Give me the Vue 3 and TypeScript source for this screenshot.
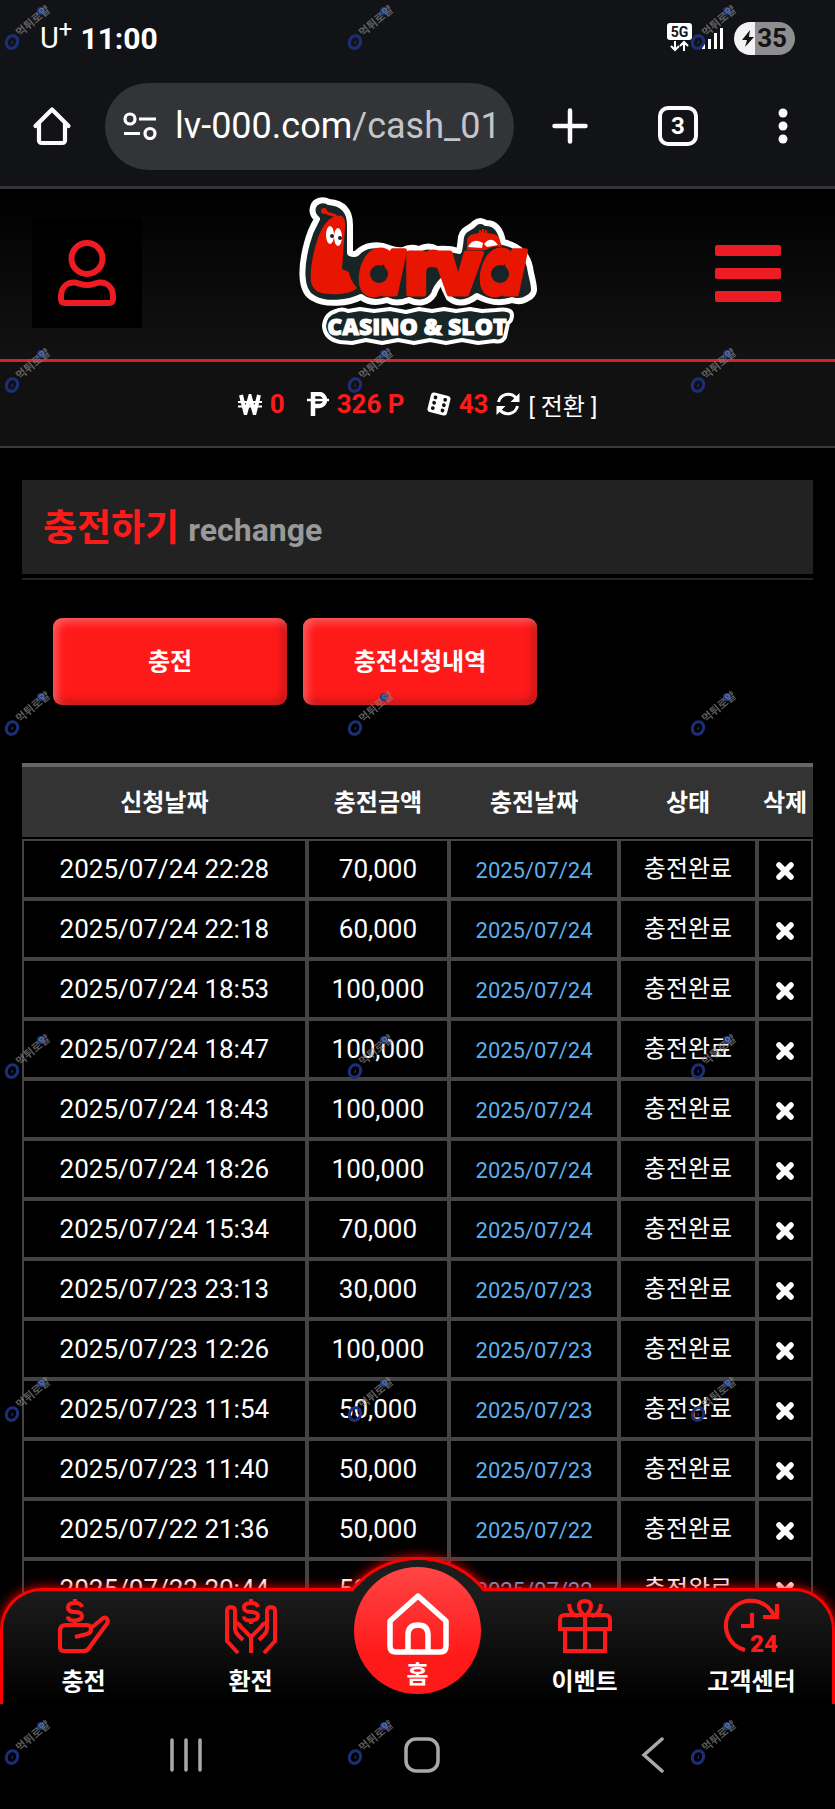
<script setup lang="ts">
interface Row {
  requested: string
  amount: string
  charged: string
}

const rows: Row[] = [
  ['2025/07/24 22:28', '70,000'],
  ['2025/07/24 22:18', '60,000'],
  ['2025/07/24 18:53', '100,000'],
  ['2025/07/24 18:47', '100,000'],
  ['2025/07/24 18:43', '100,000'],
  ['2025/07/24 18:26', '100,000'],
  ['2025/07/24 15:34', '70,000'],
  ['2025/07/23 23:13', '30,000'],
  ['2025/07/23 12:26', '100,000'],
  ['2025/07/23 11:54', '50,000'],
  ['2025/07/23 11:40', '50,000'],
  ['2025/07/22 21:36', '50,000'],
  ['2025/07/22 20:44', '50,000'],
].map(([requested, amount]) => ({ requested, amount, charged: requested.slice(0, 10) }))

const headings = ['신청날짜', '충전금액', '충전날짜', '상태', '삭제']
</script>

<template>
  <div class="phone">
    <div class="status">
      <span class="carrier">U<sup>+</sup></span>
      <span class="clock">11:00</span>
      <span class="status-icons">
        <svg width="56" height="30" viewBox="0 0 56 30" aria-label="5G">
          <rect x="0" y="0" width="25" height="17" rx="3" fill="#fff" />
          <text x="12.5" y="14" text-anchor="middle" class="five-g">5G</text>
          <path d="M8 18v9M4 23l4 4 4-4M17 28v-9M13 23l4-4 4 4" fill="none" stroke="#fff" stroke-width="2" />
          <path d="M36.500 21v5M42.500 16v10M48.500 10v16M54.500 5v21" stroke="#fff" stroke-width="3" />
        </svg>
        <span class="battery">
          <svg width="12" height="17" viewBox="0 0 12 17"><path d="M8 0 0 10h5L3 17 12 7H7Z" fill="#121317" /></svg>
          <b>35</b>
        </span>
      </span>
    </div>

    <div class="browser">
      <button class="plain" aria-label="홈페이지">
        <svg width="40" height="40" viewBox="0 0 40 40">
          <path d="M3.500 20 20 3.500 36.500 20M7 17v17.500a2.500 2.500 0 0 0 2.500 2.500h21a2.500 2.500 0 0 0 2.500-2.500V17" fill="none" stroke="#fdfafd" stroke-width="4.200" stroke-linejoin="round" stroke-linecap="round" />
        </svg>
      </button>
      <div class="address">
        <svg width="34" height="28" viewBox="0 0 34 28" fill="none" stroke="#fff" stroke-width="3.200">
          <circle cx="7" cy="7" r="5" /><path d="M16 7h17M1 21.500h16" /><circle cx="27" cy="21.500" r="5" />
        </svg>
        <span class="url">lv-000.com<i>/cash_01</i></span>
      </div>
      <button class="plain new-tab" aria-label="새 탭">
        <svg width="36" height="36" viewBox="0 0 36 36"><path d="M18 2.500v31M2.500 18h31" stroke="#fdfafd" stroke-width="4.500" stroke-linecap="round" /></svg>
      </button>
      <button class="tabs">3</button>
      <button class="plain more" aria-label="메뉴">
        <svg width="10" height="36" viewBox="0 0 10 36" fill="#fdfafd"><circle cx="5" cy="5" r="4.500" /><circle cx="5" cy="18" r="4.500" /><circle cx="5" cy="31" r="4.500" /></svg>
      </button>
    </div>

    <header class="site-header">
      <button class="account" aria-label="내 정보">
        <svg width="58" height="66" viewBox="0 0 58 66" fill="none" stroke="#ed1c24" stroke-width="6">
          <circle cx="29" cy="18.500" r="15.500" />
          <path d="M3 59V57C3 47 9 42.500 16 42.500c4 0 7 2.500 13 2.500s9-2.500 13-2.500c7 0 13 4.500 13 14.500v2q0 4-4 4H7q-4 0-4-4Z" />
        </svg>
      </button>

      <a href="#" class="logo">
        <svg width="240" height="152" viewBox="0 0 240 152" role="img" aria-label="Larva Casino &amp; Slot">
          <path
            d="M15 10C17 3 25 2 31 5C43 6 52 12 52 28V56Q56 58 59 56C66 48 80 46 91 51Q99 54 105 53Q112 49 121 52Q131 47 139 52Q151 51 161 54Q162 50 163 40C165 31 172 32 177 26Q182 22 188 26C198 26 203 33 205 45C222 49 231 58 233 76C237 92 238 97 230 101Q223 106 214 103Q197 109 179 99Q163 111 151 101Q146 92 144 84Q138 90 136 97C130 107 119 107 111 103Q98 108 89 103Q74 108 63 100C51 106 28 109 15 101C1 94 3 68 9 46C12 34 15 29 19 22Q13 17 15 10Z"
            fill="#182526" stroke="#fff" stroke-width="6" stroke-linejoin="round" />
          <g fill="#e81500">
            <path d="M38 19C27 22 21 35 17 51C13 66 12 78 13 85C15 94 22 97 32 97C43 98 54 96 59 91Q52 83 51 75L44 72L47 31C48 20 44 17 38 19Z" />
            <path d="M39 21C36 15 32 20 27 14" fill="none" stroke="#e81500" stroke-width="3" /><circle cx="26" cy="14" r="3" />
            <path d="M169 53V43Q170 38 176 37L184 35L195 37Q201 38 202 44L204 50Q195 48 188 53Z" />
            <path d="M182 38v-5M185 38v-6M188 38v-5" stroke="#e81500" stroke-width="2" />
          </g>
          <ellipse cx="32" cy="38" rx="4" ry="9" fill="#fff" /><ellipse cx="40" cy="40" rx="4" ry="9" fill="#fff" />
          <circle cx="34" cy="39" r="2" fill="#182526" /><circle cx="42" cy="41" r="2" fill="#182526" />
          <path d="M170 50Q175 40 185 46L184 51ZM186 47Q193 38 200 48L189 50Z" fill="#fff" />
          <g class="letters">
            <text class="round" x="60" y="97">a</text>
            <text x="107" y="97">r</text>
            <text x="136" y="97">v</text>
            <text class="round" x="181" y="97">a</text>
          </g>
          <circle cx="81" cy="77" r="9" fill="#182526" /><circle cx="202" cy="77" r="9" fill="#182526" />
          <path
            d="M38 114Q44 111 50 114L62 112L76 114L92 112L108 115L121 112L134 114L146 112L158 114L172 112L184 114L198 113Q214 111 214 118Q214 124 210 126L207 140Q204 146 196 144L180 146L164 143L148 146L132 143L116 146L100 143L84 146L68 143L54 146L42 145Q27 142 26 129Q27 117 38 114Z"
            fill="#182526" stroke="#fff" stroke-width="4" stroke-linejoin="round" />
          <text class="tag" x="119" y="138">CASINO &amp; SLOT</text>
        </svg>
      </a>

      <button class="burger" aria-label="전체 메뉴"><span></span><span></span><span></span></button>
    </header>

    <div class="balance">
      <svg width="24" height="21" viewBox="0 0 24 21" fill="none" stroke="#fff"><path d="M3 1 7.500 19 12 3l4.500 16L21 1" stroke-width="4" /><path d="M0 8h24M0 12.500h24" stroke-width="2" /></svg>
      <b>0</b>
      <svg class="after" width="22" height="24" viewBox="0 0 22 24" fill="none" stroke="#fff"><path d="M6 24V2h6a5.500 5.500 0 0 1 0 12H6" stroke-width="4.500" /><path d="M0 8h22" stroke-width="2.500" /></svg>
      <b>326 P</b>
      <svg class="after" width="24" height="24" viewBox="0 0 24 24">
        <g transform="rotate(14 12 12)"><rect x="2" y="2" width="20" height="20" rx="3" fill="#fff" />
          <g fill="#111"><circle cx="7" cy="6.500" r="1.900" /><circle cx="7" cy="12" r="1.900" /><circle cx="7" cy="17.500" r="1.900" /><circle cx="17" cy="6.500" r="1.900" /><circle cx="17" cy="12" r="1.900" /><circle cx="17" cy="17.500" r="1.900" /></g>
        </g>
      </svg>
      <b>43</b>
      <button class="convert">
        <svg width="24" height="24" viewBox="0 0 24 24"><path d="M2.500 10A10 10 0 0 1 20 6M21.500 14A10 10 0 0 1 4 18" fill="none" stroke="#fff" stroke-width="3" /><path d="M23.500 1v9h-9ZM.5 23v-9h9Z" fill="#fff" /></svg>
        <span>[ 전환 ]</span>
      </button>
    </div>

    <main>
      <h1>충전하기 <small>rechange</small></h1>
      <div class="actions">
        <button>충전</button>
        <button>충전신청내역</button>
      </div>
      <table>
        <colgroup><col class="c1" /><col class="c2" /><col class="c3" /><col class="c4" /><col class="c5" /></colgroup>
        <thead>
          <tr><th v-for="h in headings" :key="h" scope="col">{{ h }}</th></tr>
        </thead>
        <tbody>
          <tr v-for="r in rows" :key="r.requested">
            <td>{{ r.requested }}</td>
            <td>{{ r.amount }}</td>
            <td class="charged">{{ r.charged }}</td>
            <td class="state">충전완료</td>
            <td>
              <button class="remove" aria-label="삭제">
                <svg width="18" height="18" viewBox="0 0 18 18"><path d="m3 3 12 12M15 3 3 15" stroke="#fff" stroke-width="5.500" stroke-linecap="round" /></svg>
              </button>
            </td>
          </tr>
        </tbody>
      </table>
    </main>

    <footer class="dock">
      <nav>
        <div class="plate"></div>
        <div class="hump"></div>
        <div class="cover"></div>
        <a href="#">
          <svg width="54" height="54" viewBox="0 0 54 54" fill="none" stroke="#ff1a1a" stroke-width="4.200" stroke-linejoin="round">
            <path d="M3 48V32q0-6 6-6h21q4 0 4 4t-4 5l-12 3M33 30 45 20q3-3 5 0t-1 6L32 49q-2 3-5 3H7q-4 0-4-4" />
            <path d="M25 8q-1-4-7-4-7 0-7 4.500t7 4.500 7 4-7 4.500-7-4M18 0v4M18 21v4" />
          </svg>
          충전
        </a>
        <a href="#">
          <svg width="54" height="54" viewBox="0 0 54 54" fill="none" stroke="#ff1a1a" stroke-width="4">
            <path d="M14 54 3 42V12q0-4 4-4t4 4v18M40 54l11-12V12q0-4-4-4t-4 4v18M11 24q4 0 6 4l10 10v16M43 24q-4 0-6 4L27 38M11 30q0 3 3 6l5 5M43 30q0 3-3 6l-5 5" />
            <path d="M34 8q-1-4-7-4-7 0-7 4.500t7 4.500 7 4-7 4.500-7-4M27 0v4M27 21v4" />
          </svg>
          환전
        </a>
        <a href="#" class="home">
          <svg width="62" height="62" viewBox="0 0 62 62" fill="none" stroke="#fff" stroke-width="5.500" stroke-linejoin="round">
            <path d="M31 3 3 28v25q0 6 6 6h44q6 0 6-6V28ZM21 59V42q0-10 10-10t10 10v17" />
          </svg>
          홈
        </a>
        <a href="#">
          <svg width="54" height="54" viewBox="0 0 54 54" fill="none" stroke="#ff1a1a" stroke-width="4">
            <path d="M7 30v22h40V30M27 17v35M2 28v-7q0-5 5-5h40q5 0 5 5v9H2ZM27 17q-6-5-6-10t6-5 6 5-6 10M20 17q-8-1-9-12M34 17q8-1 9-12" />
          </svg>
          이벤트
        </a>
        <a href="#">
          <svg width="54" height="54" viewBox="0 0 54 54" fill="none" stroke="#ff1a1a" stroke-width="4.200">
            <path d="M20 51A25 25 0 1 1 49 17M52 5v13H38M27 14v13H16" />
            <text x="39" y="53" text-anchor="middle" class="n24">24</text>
          </svg>
          고객센터
        </a>
      </nav>
      <div class="system">
        <button class="plain" aria-label="최근 앱"><svg width="32" height="34" viewBox="0 0 32 34"><path d="M2 2v30M16 2v30M30 2v30" stroke="#a9a9a9" stroke-width="3.500" stroke-linecap="round" /></svg></button>
        <button class="plain" aria-label="홈 화면"><svg width="36" height="36" viewBox="0 0 36 36"><rect x="2" y="2" width="32" height="32" rx="10" fill="none" stroke="#a9a9a9" stroke-width="3.500" /></svg></button>
        <button class="plain" aria-label="뒤로"><svg width="24" height="36" viewBox="0 0 24 36"><path d="M21 2 3 18l18 16" fill="none" stroke="#a9a9a9" stroke-width="3.500" stroke-linecap="round" /></svg></button>
      </div>
    </footer>

    <svg class="watermark" aria-hidden="true">
      <defs>
        <pattern id="mark" width="343" height="343" patternUnits="userSpaceOnUse">
          <ellipse cx="12" cy="42" rx="5.500" ry="6.500" fill="none" stroke="#1c2e78" stroke-width="3" transform="rotate(25 12 42)" />
          <path d="m11 43 2-3v4Z" fill="#1c2e78" />
          <circle cx="41" cy="11" r="4" fill="#1c3a86" />
          <text class="mark-text" transform="translate(20 37) rotate(-40)">먹튀로얄</text>
        </pattern>
      </defs>
      <rect width="100%" height="100%" fill="url(#mark)" />
    </svg>
  </div>
</template>

<style>
body { background: #000; }
</style>

<style scoped>
* { box-sizing: border-box; }
.phone {
  position: relative;
  height: 100vh;
  display: flex;
  flex-direction: column;
  overflow: hidden;
  background: #000;
  color: #fff;
  font-family: Roboto, "Noto Sans CJK KR", sans-serif;
}
button { font: inherit; color: inherit; border: 0; padding: 0; background: none; }
a { color: inherit; text-decoration: none; }
svg { display: block; flex: none; }
.plain { display: flex; }
.status {
  flex: none;
  height: 76px;
  padding: 0 40px;
  display: flex;
  align-items: center;
  background: #121317;
}
.carrier { font-size: 29px; line-height: 36px; }
.carrier sup { font-size: 24px; line-height: 0; }
.clock { margin-left: 8px; font-size: 30px; font-weight: 700; }
.status-icons { margin-left: auto; display: flex; align-items: center; gap: 11px; }
.five-g { font: 700 14px Roboto, sans-serif; fill: #121317; }
.battery {
  width: 61px;
  height: 33px;
  border-radius: 17px;
  padding: 0 8px;
  display: flex;
  align-items: center;
  justify-content: space-between;
  color: #121317;
  font-size: 26px;
  background: linear-gradient(90deg, #f2f2f2 21px, #8e8e90 21px);
}
.browser {
  flex: none;
  height: 113px;
  padding: 0 47px 10px 32px;
  display: flex;
  align-items: center;
  background: #121317;
  border-bottom: 3px solid #333338;
}
.address {
  flex: 1;
  min-width: 0;
  height: 87px;
  border-radius: 44px;
  margin: 0 38px 0 33px;
  padding-left: 18px;
  display: flex;
  align-items: center;
  gap: 18px;
  background: #333438;
}
.url { font-size: 36px; line-height: 44px; white-space: nowrap; }
.url i { font-style: normal; color: #c4c5cb; }
.tabs {
  width: 40px;
  height: 40px;
  border: 4px solid #fdfafd;
  border-radius: 10px;
  font-size: 24px;
  font-weight: 700;
  line-height: 28px;
  margin: 0 80px 0 70px;
}
.site-header {
  flex: none;
  height: 173px;
  padding: 0 32px 2px;
  display: grid;
  grid-template-columns: 1fr auto 1fr;
  align-items: center;
  background: linear-gradient(#000, #121212);
  border-bottom: 3px solid #d0232a;
}
.account { width: 110px; height: 110px; display: flex; align-items: center; justify-content: center; background: #000; }
.letters { font: 900 76px Inter, sans-serif; fill: #e81500; stroke: #e81500; stroke-width: 5; stroke-linejoin: round; }
.round { font: italic 800 78px "Open Sans", sans-serif; }
.tag { font: 800 23px "Open Sans", sans-serif; text-anchor: middle; fill: #fff; stroke: #fff; stroke-width: 1; }
.burger { justify-self: end; margin-right: 22px; width: 66px; display: flex; flex-direction: column; gap: 12px; }
.burger span { height: 11px; border-radius: 2px; background: #ed1c24; }
.balance {
  flex: none;
  height: 86px;
  display: flex;
  align-items: center;
  justify-content: center;
  gap: 8px;
  background: #111;
  border-bottom: 2px solid #3a3a3a;
  font-size: 26px;
}
.balance b { color: #ff1a1a; }
.after { margin-left: 14px; }
.convert { display: flex; align-items: center; gap: 8px; font-size: 24px; }
main { flex: 1; min-height: 0; padding: 32px 22px 0; overflow: hidden; }
h1 {
  margin: 0;
  height: 94px;
  padding: 0 21px;
  font-size: 37px;
  line-height: 98px;
  background: #222;
  color: #ff1a1a;
  box-shadow: 0 4px #000, 0 6px #222;
}
h1 small { font-size: 32px; color: #999; }
.actions { display: flex; gap: 16px; padding: 44px 31px 58px; }
.actions button {
  width: 234px;
  height: 87px;
  padding-bottom: 4px;
  border-radius: 9px;
  font-size: 24px;
  font-weight: 700;
  background: #ff1a1a;
  box-shadow: inset 4px 4px 8px rgba(255, 255, 255, .3), inset -4px -4px 8px rgba(0, 0, 0, .25);
}
table { width: 100%; table-layout: fixed; border-collapse: separate; border-spacing: 0; }
.c1 { width: 36%; }
.c2 { width: 18%; }
.c4 { width: 138px; }
.c5 { width: 56px; }
th { height: 76px; padding: 0 0 4px; border-top: 4px solid #666; border-bottom: 2px solid #000; background: #333; font-size: 24px; }
td { height: 60px; padding: 0; border: 2px solid #444; text-align: center; font-size: 26px; line-height: 30px; }
td.charged { padding-top: 4px; font-size: 22px; color: #5cb0ee; }
td.state { font-size: 24px; }
.remove { display: inline-flex; vertical-align: middle; }
.dock { position: absolute; left: 0; right: 0; bottom: 0; }
nav {
  position: relative;
  height: 116px;
  display: grid;
  grid-template-columns: repeat(5, 1fr);
}
.plate, .hump, .cover { position: absolute; }
.plate {
  inset: 0;
  border: 3px solid #f00;
  border-bottom: 0;
  border-radius: 42px 42px 0 0;
  background: #1c1c1c;
  box-shadow: 0 0 12px #f00;
}
.hump {
  left: 50%;
  top: -31px;
  width: 172px;
  height: 172px;
  margin-left: -86px;
  border-radius: 50%;
  border: 3px solid #f00;
  background: #1c1c1c;
  box-shadow: 0 0 12px #f00;
  clip-path: inset(-20px -20px 138px -20px);
}
.cover {
  inset: 3px;
  bottom: 0;
  border-radius: 39px 39px 0 0;
  background: linear-gradient(#1c1c1c, #000);
}
nav a {
  position: relative;
  display: flex;
  flex-direction: column;
  align-items: center;
  gap: 11px;
  padding-top: 11px;
  font-size: 24px;
  font-weight: 700;
  line-height: 36px;
}
nav a svg { overflow: visible; }
nav .home {
  width: 127px;
  height: 127px;
  margin: -21px auto 0;
  border-radius: 50%;
  padding-top: 26px;
  gap: 4px;
  line-height: 32px;
  background: linear-gradient(#ff4545, #ff1a1a 70%);
}
.n24 { font: 900 24px Roboto, sans-serif; fill: #ff1a1a; stroke: none; }
.system {
  position: relative;
  height: 105px;
  padding: 0 170px 4px;
  display: flex;
  align-items: center;
  justify-content: space-between;
  background: #000;
}
.watermark { position: absolute; inset: 0; width: 100%; height: 100%; pointer-events: none; }
.mark-text { font: 700 11px "Noto Sans CJK KR", sans-serif; fill: #8a8a8a; fill-opacity: .65; }
</style>
